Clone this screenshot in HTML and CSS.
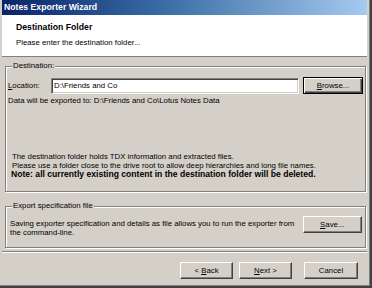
FILE: index.html
```html
<!DOCTYPE html>
<html lang="en">
<head>
    <meta charset="UTF-8">
    <title>Notes Exporter Wizard</title>
    <link rel="stylesheet" href="styles.css">
</head>
<body>
    <div class="window">
        <div class="titlebar">Notes Exporter Wizard</div>
        <div class="header">
            <div class="header-title">Destination Folder</div>
            <div class="header-sub">Please enter the destination folder...</div>
        </div>
        <fieldset class="group group-dest">
            <legend>Destination:</legend>
            <div class="row">
                <label class="field-label" for="location"><u>L</u>ocation:</label>
                <div class="input" id="location">D:\Friends and Co</div>
                <button class="btn btn-default"><u>B</u>rowse...</button>
            </div>
            <div class="export-path">Data will be exported to: D:\Friends and Co\Lotus Notes Data</div>
            <div class="info">
                <div>The destination folder holds TDX information and extracted files.</div>
                <div>Please use a folder close to the drive root to allow deep hierarchies and long file names.</div>
            </div>
            <div class="note">Note: all currently existing content in the destination folder will be deleted.</div>
        </fieldset>
        <fieldset class="group group-spec">
            <legend>Export specification file</legend>
            <div class="row row-top">
                <div class="spec-text">Saving exporter specification and details as file allows you to run the exporter from<br>the command-line.</div>
                <button class="btn"><u>S</u>ave...</button>
            </div>
        </fieldset>
        <div class="separator"></div>
        <div class="buttons">
            <button class="btn btn-nav">&lt; <u>B</u>ack</button>
            <button class="btn btn-nav"><u>N</u>ext &gt;</button>
            <button class="btn btn-nav btn-cancel">Cancel</button>
        </div>
    </div>
</body>
</html>
```

FILE: styles.css
```css
body { margin: 0; background: #d4d0c8; font-family: "Liberation Sans", Arial, sans-serif; font-size: 7.8px; color: #000; }
.window { width: 372px; height: 288px; box-sizing: border-box; padding: 0 5px 4px 2px; box-shadow: inset -1px -1px #404040, inset -2px -2px #404040, inset -3px -3px #808080; overflow: hidden; }
.titlebar { height: 15px; line-height: 15px; padding-left: 2px; color: #fff; font-weight: bold; font-size: 8.7px; background: linear-gradient(to right, #0a246a, #3a6ea5 45%, #a6caf0); }
.header { height: 42px; box-sizing: border-box; padding: 7px 0 0 14px; background: #fff; border-bottom: 1px solid #808080; }
.header-title { font-weight: bold; font-size: 8.7px; line-height: 10px; }
.header-sub { line-height: 10px; margin-top: 6px; }

.group { margin: 0 1px 0 3px; padding: 0 2px 0 2px; border: 1px solid #808080; box-shadow: inset 1px 1px #fff, 1px 1px #fff; min-width: 0; }
.group legend { margin-left: 4px; padding: 0 1px; line-height: 10px; background: #d4d0c8; }
.group-dest { margin-top: 4px; padding-top: 6px; padding-bottom: 12px; }
.group-spec { margin-top: 9px; padding-top: 5px; padding-bottom: 10px; }

.row { display: flex; align-items: center; }
.row-top { align-items: flex-start; }
.field-label { width: 43px; }
.input { width: 248px; height: 16px; box-sizing: border-box; padding-left: 2px; line-height: 14px; background: #fff; border: 1px solid; border-color: #808080 #fff #fff #808080; box-shadow: inset 1px 1px #404040, inset -1px -1px #d4d0c8; }

.btn { width: 60px; height: 17px; padding: 0; margin-left: 4px; font: inherit; color: #000; background: #d4d0c8; border: 1px solid; border-color: #fff #404040 #404040 #fff; box-shadow: inset -1px -1px #808080; }
.btn-default { border-color: #000; box-shadow: inset 1px 1px #fff, inset -1px -1px #404040, inset -2px -2px #808080; }

.export-path { margin-top: 2px; line-height: 10px; }
.info { margin-top: 47px; padding-left: 4px; line-height: 8.5px; }
.note { margin-top: 0; padding-left: 3px; line-height: 9px; font-weight: bold; font-size: 8.6px; }

.spec-text { width: 295px; margin-top: 3px; padding-left: 2px; line-height: 9px; }
.group-spec .btn { margin-left: auto; margin-right: 1px; }

.separator { margin-top: 3px; height: 0; border-top: 1px solid #808080; border-bottom: 1px solid #fff; }
.buttons { display: flex; justify-content: flex-end; margin-top: 9px; padding-right: 9px; }
.btn-nav { width: 53px; margin-left: 6px; }
.btn-cancel { width: 54px; margin-left: 12px; }
```
